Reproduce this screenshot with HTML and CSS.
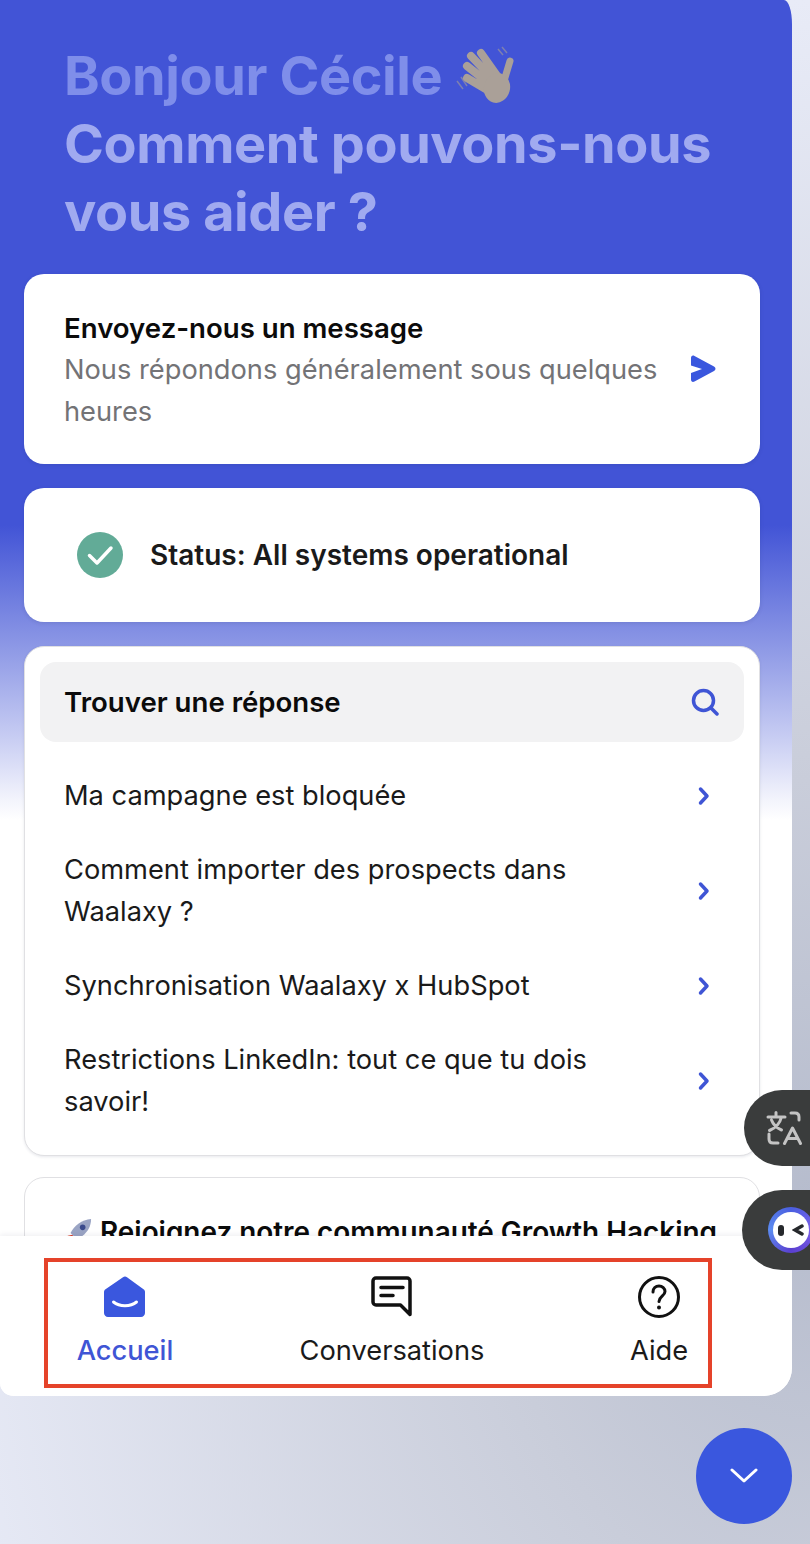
FILE: index.html
```html
<!DOCTYPE html>
<html lang="fr">
<head>
<meta charset="utf-8">
<title>Waalaxy</title>
<link rel="stylesheet" href="styles.css">
</head>
<body>
<main class="panel">
  <div class="scroll">
    <header class="hero">
      <h1 class="hero-title">
        <span class="hero-line-dim">Bonjour Cécile
          <svg class="hand" viewBox="0 0 60 60" aria-hidden="true">
            <path class="wave" d="M2 36l6 8M6 32l6 9M43 4l5 6M47 2l5 6"/>
            <path class="finger" d="M12 33L34 46M12 21L36 40M16 11L38 34M26 8L43 32"/>
            <path class="thumb" d="M55 16L49 36"/>
            <ellipse class="palm" cx="42" cy="43" rx="13" ry="15" transform="rotate(15 42 43)"/>
          </svg>
        </span><br>
        <span class="hero-line">Comment pouvons-nous<br>vous aider ?</span>
      </h1>
    </header>

    <div class="cards">
      <section class="card card-send">
        <div class="send-text">
          <div class="strong">Envoyez-nous un message</div>
          <div class="muted">Nous répondons généralement sous quelques heures</div>
        </div>
        <svg class="send-icon" viewBox="0 0 26 28" aria-hidden="true">
          <path d="M1 3C1 1 2.500 0 4.500 1L24 11.500c2 1.300 2 3.500 0 4.500L4.500 26.500C2.500 27.500 1 26.500 1 24.500V18L12 14 1 10.500z"/>
        </svg>
      </section>

      <section class="card card-status">
        <svg class="status-icon" viewBox="0 0 46 46" aria-hidden="true">
          <circle cx="23" cy="23" r="23" class="status-disc"/>
          <path d="M12.500 23.500l7.500 7.500 14-15" class="status-tick"/>
        </svg>
        <span class="status-text">Status: All systems operational</span>
      </section>

      <section class="card card-list">
        <div class="search">
          <span class="strong">Trouver une réponse</span>
          <svg class="search-icon" viewBox="0 0 28 28" aria-hidden="true">
            <circle cx="12.500" cy="12.500" r="10"/>
            <path d="M20 20l6 6"/>
          </svg>
        </div>
        <ul class="links">
          <li class="link"><span>Ma campagne est bloquée</span><svg class="chev" viewBox="0 0 12 20" aria-hidden="true"><path d="M2.500 3l6.500 7-6.500 7"/></svg></li>
          <li class="link"><span>Comment importer des prospects dans Waalaxy ?</span><svg class="chev" viewBox="0 0 12 20" aria-hidden="true"><path d="M2.500 3l6.500 7-6.500 7"/></svg></li>
          <li class="link"><span>Synchronisation Waalaxy x HubSpot</span><svg class="chev" viewBox="0 0 12 20" aria-hidden="true"><path d="M2.500 3l6.500 7-6.500 7"/></svg></li>
          <li class="link"><span>Restrictions LinkedIn: tout ce que tu dois savoir!</span><svg class="chev" viewBox="0 0 12 20" aria-hidden="true"><path d="M2.500 3l6.500 7-6.500 7"/></svg></li>
        </ul>
      </section>

      <section class="card card-community">
        <div class="community-title">
          <svg class="rocket" viewBox="0 0 30 30" aria-hidden="true">
            <path class="rocket-flame" d="M1 28l3-9 5-1 3 4-1 4z"/>
            <path class="rocket-body" d="M7 16C11 8 19 2 29 1c0 10-6 17-15 22z"/>
            <circle class="rocket-window" cx="20" cy="10" r="3"/>
          </svg>
          <span>Rejoignez notre communauté Growth Hacking</span>
        </div>
      </section>
    </div>
  </div>

  <nav class="tabs">
    <div class="tab tab-active">
      <svg class="tab-icon" viewBox="0 0 42 42" aria-hidden="true">
        <path class="home-shape" d="M19 1.200c1.200-.9 2.800-.9 4 0l16.500 12c1 .7 1.500 1.700 1.500 2.800V37c0 2.200-1.800 4-4 4H4c-2.200 0-4-1.800-4-4V16c0-1.100.5-2.100 1.500-2.800z"/>
        <path class="home-smile" d="M9.500 26c6 5 17 5 23 0"/>
      </svg>
      <span>Accueil</span>
    </div>
    <div class="tab">
      <svg class="tab-icon" viewBox="0 0 42 42" aria-hidden="true">
        <path class="line-icon" d="M5 2h31c1.700 0 3 1.300 3 3v33.500L29.500 29H5c-1.700 0-3-1.300-3-3V5c0-1.700 1.300-3 3-3z"/>
        <path class="line-icon" d="M10 11.500h22M10 19.500h12"/>
      </svg>
      <span>Conversations</span>
    </div>
    <div class="tab">
      <svg class="tab-icon" viewBox="0 0 42 42" aria-hidden="true">
        <circle class="line-icon thin" cx="21" cy="21" r="19.500"/>
        <path class="line-icon thin" d="M15 16c0-3.500 2.700-6 6-6s6 2.500 6 5.500c0 4.500-6 5-6 10"/>
        <circle class="dot" cx="21" cy="31.500" r="2"/>
      </svg>
      <span>Aide</span>
    </div>
  </nav>
  <div class="highlight"></div>
</main>

<aside class="float float-translate">
  <svg class="translate-icon" viewBox="0 0 36 36" aria-hidden="true">
    <path d="M2 7h17M10 2.500V7M15.500 7c-1.500 6-6 11-12 13.500M5.500 10c1.500 4 5 8 10 10"/>
    <path d="M25 3h4c2.500 0 4 1.500 4 4v3"/>
    <path d="M3 24v5c0 2.500 1.500 4 4 4h5"/>
    <path d="M18.500 33.500L26.500 18l8 15.500M21 28.500h11"/>
  </svg>
</aside>

<aside class="float float-bot">
  <span class="bot-ring">
    <span class="bot-face">
      <span class="bot-eye"></span>
      <svg class="bot-wink" viewBox="0 0 12 12" aria-hidden="true"><path d="M10 2L3 6l7 4"/></svg>
    </span>
  </span>
</aside>

<button class="launcher" type="button" aria-label="Fermer">
  <svg viewBox="0 0 28 16" aria-hidden="true"><path d="M2 2l12 11L26 2"/></svg>
</button>
</body>
</html>
```

FILE: styles.css
```css
* { box-sizing: border-box; }

html, body {
  margin: 0;
  height: 1544px;
  overflow: hidden;
}

body {
  position: relative;
  width: 810px;
  font-family: Inter, "Liberation Sans", sans-serif;
  font-size: 27.25px;
  line-height: 42px;
  color: #1a1a1a;
  background: radial-gradient(900px 1200px at 810px 1200px, #b6bccd 0, #c9cdda 35%, #e8ebf7 100%);
}

.panel {
  position: relative;
  width: 792px;
  height: 1396px;
  display: flex;
  flex-direction: column;
  overflow: hidden;
  border-radius: 8px 8px 28px 14px / 24px 24px 28px 13px;
  border-top-left-radius: 0;
  background: linear-gradient(180deg, #4254d6 0, #4254d6 525px, #8f9ae6 650px, #c9cef3 740px, #f3f4fc 800px, #fff 820px);
}

.scroll {
  flex: 1;
  min-height: 0;
  overflow: hidden;
}

.hero { padding: 42px 20px 28px 64px; }

.hero-title {
  margin: 0;
  font-size: 54px;
  line-height: 68px;
  font-weight: 700;
  color: #a0aaf0;
  letter-spacing: -.4px;
  white-space: nowrap;
}

.hero-line-dim { color: #7f8eea; }

.hand {
  width: 60px;
  height: 60px;
  vertical-align: -10px;
  margin-left: 0;
}

.finger { fill: none; stroke: #aaa098; stroke-width: 8; stroke-linecap: round; }
.thumb { fill: none; stroke: #aaa098; stroke-width: 7; stroke-linecap: round; }
.palm { fill: #aaa098; }
.wave { fill: none; stroke: #7d7fb0; stroke-width: 1.500; }

.cards {
  display: flex;
  flex-direction: column;
  gap: 24px;
  padding: 0 32px 0 24px;
}

.card {
  background: #fff;
  border-radius: 20px;
  box-shadow: 0 1px 4px rgba(20, 30, 70, .12);
}

.strong { font-size: 27.6px; font-weight: 600; color: #0b0b0b; }
.muted { color: #737376; }

.card-send {
  display: flex;
  align-items: center;
  gap: 32px;
  padding: 33px 44px 31px 40px;
}

.send-text { flex: 1; }

.send-icon {
  width: 26px;
  height: 28px;
  flex: none;
  margin-bottom: 3px;
  fill: #3a57de;
}

.card-status {
  display: flex;
  align-items: center;
  height: 134px;
  padding-left: 53px;
  gap: 27px;
}

.status-icon { width: 46px; height: 46px; flex: none; }
.status-disc { fill: #62ab97; }
.status-tick { fill: none; stroke: #fff; stroke-width: 3.500; stroke-linecap: round; stroke-linejoin: round; }
.status-text { font-size: 28px; font-weight: 600; }

.card-list {
  padding: 15px 16px 16px;
  border: 1px solid #e0e0e3;
  box-shadow: 0 1px 3px rgba(20, 30, 70, .1);
}

.search {
  display: flex;
  align-items: center;
  justify-content: space-between;
  height: 80px;
  margin: 0 -1px;
  padding: 0 25px 0 24px;
  border-radius: 16px;
  background: #f2f2f3;
}

.search-icon {
  width: 28px;
  height: 28px;
  fill: none;
  stroke: #3f55d5;
  stroke-width: 3.500;
  stroke-linecap: round;
}

.links {
  list-style: none;
  margin: 0;
  padding: 17px 0 0;
}

.link {
  display: flex;
  align-items: center;
  justify-content: space-between;
  gap: 80px;
  padding: 16px 34px 16px 24px;
  margin: 0 -1px;
}

.link span { flex: 1; }

.chev {
  width: 12px;
  height: 20px;
  flex: none;
  fill: none;
  stroke: #3f55d5;
  stroke-width: 3.500;
  stroke-linecap: round;
  stroke-linejoin: round;
}

.card-community {
  height: 120px;
  padding: 33px 39px;
  border: 1px solid #e0e0e3;
  box-shadow: none;
  margin-top: -3px;
}

.community-title {
  display: flex;
  align-items: center;
  gap: 8px;
  font-size: 27.9px;
  font-weight: 600;
  color: #0b0b0b;
  white-space: nowrap;
}

.rocket { width: 28px; height: 28px; flex: none; }
.rocket-flame { fill: #d9432f; }
.rocket-body { fill: #9aa4c4; }
.rocket-window { fill: #3a4a8c; }

.tabs {
  flex: none;
  display: flex;
  justify-content: space-between;
  height: 160px;
  padding: 40px 37px 0 29px;
  background: #fff;
  box-shadow: 0 -1px 6px rgba(20, 30, 70, .08);
  position: relative;
}

.tab {
  width: 192px;
  display: flex;
  flex-direction: column;
  align-items: center;
  gap: 12px;
}

.tab-icon { width: 42px; height: 42px; flex: none; }
.tab-active { color: #3f55d5; font-weight: 500; }

.home-shape { fill: #3a57de; }
.home-smile { fill: none; stroke: #fff; stroke-width: 3; stroke-linecap: round; }

.line-icon {
  fill: none;
  stroke: #111;
  stroke-width: 3.500;
  stroke-linecap: round;
  stroke-linejoin: round;
}

.line-icon.thin { stroke-width: 3; }
.dot { fill: #111; }

.highlight {
  position: absolute;
  left: 44px;
  top: 1258px;
  width: 668px;
  height: 130px;
  border: 4px solid #e5432a;
}

.float {
  position: absolute;
  display: flex;
  align-items: center;
  background: #3a3c3c;
}

.float-translate {
  right: 0;
  top: 1090px;
  width: 66px;
  height: 76px;
  padding-left: 22px;
  border-radius: 38px 0 0 38px;
}

.translate-icon {
  width: 36px;
  height: 36px;
  flex: none;
  fill: none;
  stroke: #c4c4c4;
  stroke-width: 3;
  stroke-linecap: round;
  stroke-linejoin: round;
}

.float-bot {
  right: 0;
  top: 1190px;
  width: 68px;
  height: 80px;
  padding-left: 26px;
  border-radius: 40px 0 0 40px;
}

.bot-ring {
  width: 46px;
  height: 46px;
  flex: none;
  display: flex;
  align-items: center;
  justify-content: center;
  border-radius: 50%;
  background: conic-gradient(#4a5fe0, #7a5fe8, #5a3fd0, #5b8bf0, #4a5fe0);
}

.bot-face {
  width: 36px;
  height: 36px;
  flex: none;
  display: flex;
  align-items: center;
  justify-content: center;
  gap: 8px;
  border-radius: 50%;
  background: #fff;
}

.bot-eye {
  width: 6px;
  height: 11px;
  border-radius: 3px;
  background: #26282c;
}

.bot-wink {
  width: 12px;
  height: 12px;
  fill: none;
  stroke: #26282c;
  stroke-width: 3.500;
  stroke-linecap: round;
}

.launcher {
  position: absolute;
  left: 696px;
  top: 1428px;
  width: 96px;
  height: 96px;
  padding: 0;
  display: flex;
  align-items: center;
  justify-content: center;
  border: 0;
  border-radius: 50%;
  background: #3a57de;
}

.launcher svg {
  width: 28px;
  height: 16px;
  fill: none;
  stroke: #fff;
  stroke-width: 3;
  stroke-linecap: round;
  stroke-linejoin: round;
}
```
